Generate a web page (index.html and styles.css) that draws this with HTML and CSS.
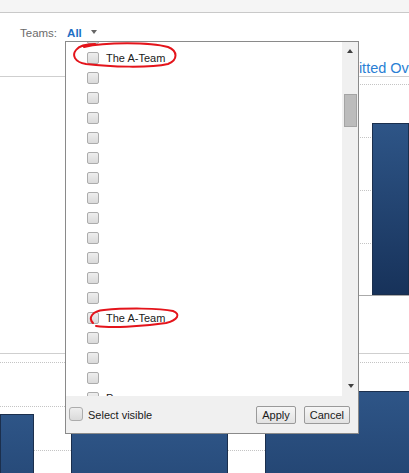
FILE: index.html
```html
<!DOCTYPE html>
<html>
	<head>
		<link rel="stylesheet" href="styles.css">
	</head>
	<body>
		<div class="topbar"></div>
		<div class="filter">
			<span class="flabel">Teams:</span>
			<span class="fvalue">All</span>
			<span class="fcaret"></span>
		</div>
		<div class="tabs">
			<span class="tab">Submitted Overview</span>
		</div>
		<div class="chart1">
			<div class="grid">
				<div class="gline first"></div>
				<div class="gline"></div>
				<div class="gline"></div>
				<div class="gline"></div>
			</div>
			<div class="bars bars1">
				<div class="bar" style="width: 37px; height: 172px;"></div>
			</div>
		</div>
		<div class="chart2">
			<div class="grid">
				<div class="gline2 first"></div>
				<div class="gline2"></div>
				<div class="gline2"></div>
			</div>
			<div class="bars bars2">
				<div class="bar" style="width: 34px; margin-top: 60px;"></div>
				<div class="bar" style="width: 157px; margin-top: 70px;"></div>
				<div class="bar" style="width: 150px; margin-top: 37px;"></div>
			</div>
		</div>

		<div class="dropdown">
			<div class="ddbody">
				<div class="ddlist">
					<div class="row partial"><span class="cb"></span></div>
					<div class="row"><span class="cb"></span><span class="rtext">The A-Team</span></div>
					<div class="row"><span class="cb"></span></div>
					<div class="row"><span class="cb"></span></div>
					<div class="row"><span class="cb"></span></div>
					<div class="row"><span class="cb"></span></div>
					<div class="row"><span class="cb"></span></div>
					<div class="row"><span class="cb"></span></div>
					<div class="row"><span class="cb"></span></div>
					<div class="row"><span class="cb"></span></div>
					<div class="row"><span class="cb"></span></div>
					<div class="row"><span class="cb"></span></div>
					<div class="row"><span class="cb"></span></div>
					<div class="row"><span class="cb"></span></div>
					<div class="row"><span class="cb"></span><span class="rtext">The A-Team</span></div>
					<div class="row"><span class="cb"></span></div>
					<div class="row"><span class="cb"></span></div>
					<div class="row"><span class="cb"></span></div>
					<div class="row"><span class="cb"></span><span class="rtext">Possessors</span></div>
				</div>
				<div class="scroll">
					<span class="sup"></span>
					<span class="thumb"></span>
					<span class="sdown"></span>
				</div>
			</div>
			<div class="ddfoot">
				<span class="cb big"></span>
				<span class="selvis">Select visible</span>
				<span class="btn">Apply</span>
				<span class="btn">Cancel</span>
			</div>
		</div>

		<!-- hand drawn marks on the screenshot -->
		<svg class="marks" width="409" height="473" viewBox="0 0 409 473">
			<path d="M84 47 C105 42, 150 42, 168 47 C178 51, 178 60, 168 64 C150 68, 110 67, 86 64 C74 62, 72 55, 76 50 C79 46, 86 44, 95 44" />
			<path d="M93 323 C88 318, 92 311, 104 310 C125 308, 160 308, 173 311 C181 314, 178 320, 166 323 C140 327, 110 328, 96 326" />
		</svg>
	</body>
</html>
```

FILE: styles.css
```css
body {
	margin: 0; width: 409px; height: 473px; overflow: hidden; position: relative;
	font-family: "Liberation Sans", Arial, sans-serif; background: #fff;
}
.topbar {
	height: 12px; background: #f5f5f5; border-bottom: 1px solid #c9c9c9;
}
.filter {
	height: 31px; display: flex; align-items: flex-start; padding-left: 20px; box-sizing: border-box; padding-top: 14px;
}
.flabel {
	font-size: 11.5px; color: #6b6b6b;
}
.fvalue {
	font-size: 11.5px; font-weight: bold; color: #1d6fc4; margin-left: 10px;
}
.fcaret {
	width: 0; height: 0; margin-left: 9px; margin-top: 3px;
	border-left: 3px solid transparent; border-right: 3px solid transparent; border-top: 4px solid #666;
}
.tabs {
	border-bottom: 1px solid #cfcfcf; box-sizing: border-box; height: 33px; padding-top: 15px;
}
.tab {
	font-size: 14.5px; color: #2a7fd4; margin-left: 321px; white-space: nowrap;
}
.chart1 {
	position: relative; height: 219px; margin-left: 70px; border-bottom: 1px solid #aaa; box-sizing: border-box;
}
.chart2 {
	position: relative; height: 120px; margin-top: 57px; border-top: 1px solid #cfcfcf;
}
.grid {
	position: absolute; left: 0; right: 0; top: 0; bottom: 0; display: flex; flex-direction: column;
}
.gline {
	border-top: 1px dotted #c4c4c4; height: 52px; flex: none;
}
.gline.first {
	margin-top: 7px;
}
.gline2 {
	border-top: 1px dotted #c4c4c4; height: 43px; flex: none;
}
.gline2.first {
	margin-top: 8px;
}
.bars {
	position: absolute; left: 0; right: 0; bottom: 0; display: flex; align-items: flex-end;
}
.bars1 {
	justify-content: flex-end;
}
.bars2 {
	bottom: auto; top: 0; height: 140px; align-items: flex-start; gap: 37px;
}
.bar {
	flex: none; background: linear-gradient(#2e5587, #17325a); border: 1px solid #1b2f4d; box-sizing: border-box;
}
.bars2 .bar {
	height: 200px;
}

/* dropdown */
.dropdown {
	position: absolute; left: 65px; top: 41px; width: 292px; height: 391px;
	border: 1px solid #8a8a8a; background: #fff; display: flex; flex-direction: column;
}
.ddbody {
	height: 354px; display: flex; flex: none;
}
.ddlist {
	flex: 1; overflow: hidden;
}
.row {
	height: 20px; display: flex; align-items: center; padding-left: 21px; flex: none;
}
.row.partial {
	margin-top: -14px;
}
.cb {
	width: 10px; height: 10px; border: 1px solid #acacac; border-radius: 2px; flex: none;
	background: linear-gradient(#eeeeee, #dadada); display: inline-block;
}
.rtext {
	font-size: 11px; color: #1a1a1a; margin-left: 7px;
}
.scroll {
	width: 16px; background: #f0f0f0; display: flex; flex-direction: column; align-items: center;
}
.sup {
	width: 0; height: 0; margin-top: 7px;
	border-left: 3.5px solid transparent; border-right: 3.5px solid transparent; border-bottom: 4px solid #404040;
}
.thumb {
	width: 11px; height: 31px; margin-top: 41px; margin-left: 1px; background: #bcbcbc; border: 1px solid #a4a4a4;
}
.sdown {
	width: 0; height: 0; margin-top: auto; margin-bottom: 8px; margin-left: 1px;
	border-left: 3.5px solid transparent; border-right: 3.5px solid transparent; border-top: 4px solid #404040;
}
.ddfoot {
	flex: 1; background: #f0f0f0; display: flex; align-items: center; padding: 0 8px 0 3px;
}
.cb.big {
	width: 12px; height: 12px; border-radius: 3px; margin-top: -1px;
}
.selvis {
	font-size: 11px; color: #1a1a1a; margin-left: 5px; flex: 1;
}
.btn {
	font-size: 11px; color: #1a1a1a; height: 16px; line-height: 16px; padding: 0 5px; margin-left: 8px;
	border: 1px solid #9a9a9a; border-radius: 2px; background: linear-gradient(#f6f6f6, #e2e2e2);
}
.marks {
	position: absolute; left: 0; top: 0; pointer-events: none;
}
.marks path {
	fill: none; stroke: #e4141b; stroke-width: 2; stroke-linecap: round;
}
```
